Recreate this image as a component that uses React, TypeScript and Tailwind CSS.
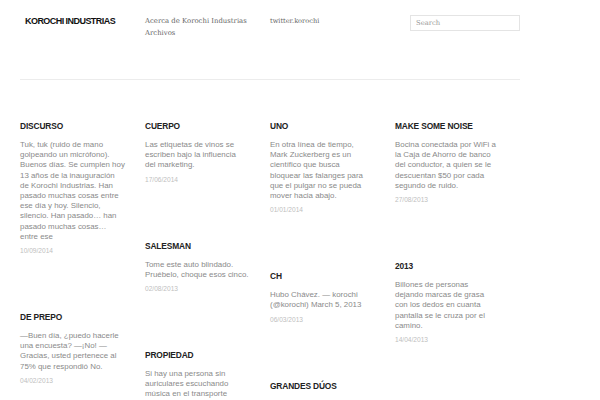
type Post = {
  title: string;
  lines: string[];
  date?: string;
};

const columns: Post[][] = [
  [
    {
      title: "Discurso",
      lines: [
        "Tuk, tuk (ruido de mano",
        "golpeando un micrófono).",
        "Buenos días. Se cumplen hoy",
        "13 años de la inauguración",
        "de Korochi Industrias. Han",
        "pasado muchas cosas entre",
        "ese día y hoy. Silencio,",
        "silencio. Han pasado… han",
        "pasado muchas cosas…",
        "entre ese",
      ],
      date: "10/09/2014",
    },
    {
      title: "De prepo",
      lines: [
        "—Buen día, ¿puedo hacerle",
        "una encuesta? —¡No! —",
        "Gracias, usted pertenece al",
        "75% que respondió No.",
      ],
      date: "04/02/2013",
    },
  ],
  [
    {
      title: "Cuerpo",
      lines: ["Las etiquetas de vinos se", "escriben bajo la influencia", "del marketing."],
      date: "17/06/2014",
    },
    {
      title: "Salesman",
      lines: ["Tome este auto blindado.", "Pruébelo, choque esos cinco."],
      date: "02/08/2013",
    },
    {
      title: "Propiedad",
      lines: [
        "Si hay una persona sin",
        "auriculares escuchando",
        "música en el transporte",
        "público existe siempre una",
        "persona que escucha",
      ],
    },
  ],
  [
    {
      title: "Uno",
      lines: [
        "En otra línea de tiempo,",
        "Mark Zuckerberg es un",
        "científico que busca",
        "bloquear las falanges para",
        "que el pulgar no se pueda",
        "mover hacia abajo.",
      ],
      date: "01/01/2014",
    },
    {
      title: "CH",
      lines: ["Hubo Chávez. — korochi", "(@korochi) March 5, 2013"],
      date: "06/03/2013",
    },
    {
      title: "Grandes dúos",
      lines: ["Point & Click, Tap & Share,", "Copy & Paste."],
    },
  ],
  [
    {
      title: "Make some noise",
      lines: [
        "Bocina conectada por WiFi a",
        "la Caja de Ahorro de banco",
        "del conductor, a quien se le",
        "descuentan $50 por cada",
        "segundo de ruido.",
      ],
      date: "27/08/2013",
    },
    {
      title: "2013",
      lines: [
        "Billones de personas",
        "dejando marcas de grasa",
        "con los dedos en cuanta",
        "pantalla se le cruza por el",
        "camino.",
      ],
      date: "14/04/2013",
    },
    {
      title: "Promesas para este año",
      lines: ["Dejar de fumar."],
    },
  ],
];

const PostCard = ({ post }: { post: Post }) => (
  <article className="flex flex-col">
    <h2 className="text-[8.4px] leading-[10px] font-bold uppercase text-[#222] tracking-[-0.15px] whitespace-nowrap">
      {post.title}
    </h2>
    <div className="mt-[9px] text-[7.9px] leading-[10.2px] text-[#8a8a8a]">
      {post.lines.map((l, i) => (
        <p key={i} className="whitespace-nowrap">{l}</p>
      ))}
    </div>
    {post.date && (
      <p className="mt-[4px] text-[6.6px] leading-[10px] text-[#c0c0c0]">{post.date}</p>
    )}
  </article>
);

export default function App() {
  return (
    <div className="w-[600px] h-[400px] overflow-hidden bg-white font-['Liberation_Sans',Arial,sans-serif]">
      <div className="w-[500px] ml-[20px]">
        {/* Header */}
        <header className="h-[80px] border-b border-[#ececec] flex items-start pt-[15px]">
          <div className="w-[125px] pl-[5px] pt-[1px]">
            <h1 className="text-[9px] leading-[10px] font-bold text-[#111] tracking-[-0.55px] whitespace-nowrap">
              KOROCHI INDUSTRIAS
            </h1>
          </div>
          <nav className="w-[125px] font-['DejaVu_Serif',serif] text-[6.9px] leading-[12px] text-[#666]">
            <p className="whitespace-nowrap">Acerca de Korochi Industrias</p>
            <p>Archivos</p>
          </nav>
          <div className="w-[125px] font-['DejaVu_Serif',serif] text-[6.6px] leading-[12px] text-[#666]">
            twitter.korochi
          </div>
          <div className="flex-1 flex justify-end">
            <div className="w-[110px] h-[16px] border border-[#e4e4e4] flex items-center pl-[5px] font-['DejaVu_Serif',serif] text-[6.8px] text-[#999]">
              Search
            </div>
          </div>
        </header>

        {/* Posts */}
        <main className="grid grid-cols-4 pt-[41px]">
          {columns.map((col, ci) => (
            <div key={ci} className="flex flex-col gap-[56px]">
              {col.map((post) => (
                <PostCard key={post.title} post={post} />
              ))}
            </div>
          ))}
        </main>
      </div>
    </div>
  );
}
